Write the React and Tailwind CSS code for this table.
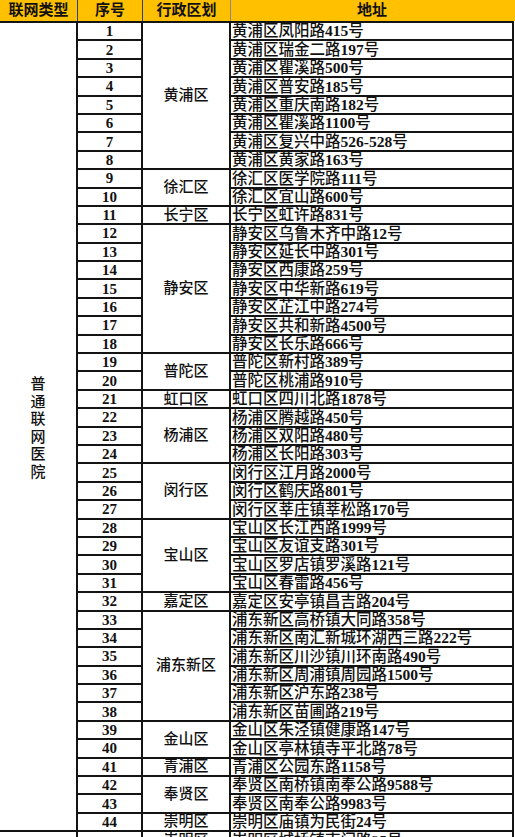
import React from 'react';

const groups = [
  { district: '黄浦区', items: ['黄浦区凤阳路415号', '黄浦区瑞金二路197号', '黄浦区瞿溪路500号', '黄浦区普安路185号', '黄浦区重庆南路182号', '黄浦区瞿溪路1100号', '黄浦区复兴中路526-528号', '黄浦区黄家路163号'] },
  { district: '徐汇区', items: ['徐汇区医学院路111号', '徐汇区宜山路600号'] },
  { district: '长宁区', items: ['长宁区虹许路831号'] },
  { district: '静安区', items: ['静安区乌鲁木齐中路12号', '静安区延长中路301号', '静安区西康路259号', '静安区中华新路619号', '静安区芷江中路274号', '静安区共和新路4500号', '静安区长乐路666号'] },
  { district: '普陀区', items: ['普陀区新村路389号', '普陀区桃浦路910号'] },
  { district: '虹口区', items: ['虹口区四川北路1878号'] },
  { district: '杨浦区', items: ['杨浦区腾越路450号', '杨浦区双阳路480号', '杨浦区长阳路303号'] },
  { district: '闵行区', items: ['闵行区江月路2000号', '闵行区鹤庆路801号', '闵行区莘庄镇莘松路170号'] },
  { district: '宝山区', items: ['宝山区长江西路1999号', '宝山区友谊支路301号', '宝山区罗店镇罗溪路121号', '宝山区春雷路456号'] },
  { district: '嘉定区', items: ['嘉定区安亭镇昌吉路204号'] },
  { district: '浦东新区', items: ['浦东新区高桥镇大同路358号', '浦东新区南汇新城环湖西三路222号', '浦东新区川沙镇川环南路490号', '浦东新区周浦镇周园路1500号', '浦东新区沪东路238号', '浦东新区苗圃路219号'] },
  { district: '金山区', items: ['金山区朱泾镇健康路147号', '金山区亭林镇寺平北路78号'] },
  { district: '青浦区', items: ['青浦区公园东路1158号'] },
  { district: '奉贤区', items: ['奉贤区南桥镇南奉公路9588号', '奉贤区南奉公路9983号'] },
  { district: '崇明区', items: ['崇明区庙镇为民街24号'] },
];

const spanClass = {
  1: 'row-span-1',
  2: 'row-span-2',
  3: 'row-span-3',
  4: 'row-span-4',
  6: 'row-span-6',
  7: 'row-span-7',
  8: 'row-span-8',
};

const font = { fontFamily: '"Liberation Serif", "Noto Sans CJK SC", serif' };

// digits in the address column are printed bold, like the sheet's font
function Address({ text }) {
  return text.split(/(\d[\d-]*)/).map((part, i) =>
    /\d/.test(part) ? (
      <span key={i} className="font-bold">{part}</span>
    ) : (
      <span key={i}>{part}</span>
    )
  );
}

export default function App() {
  let n = 0;
  const cells = [];
  groups.forEach((g, gi) => {
    g.items.forEach((addr, i) => {
      n += 1;
      cells.push(
        <div key={`n${n}`} className="col-start-2 bg-white flex items-center justify-center text-[15px] font-bold leading-none pt-[1px]">
          {n}
        </div>
      );
      if (i === 0) {
        cells.push(
          <div key={`d${gi}`} className={`col-start-3 ${spanClass[g.items.length]} bg-white flex items-center justify-center text-[15px] font-medium leading-none`}>
            {g.district}
          </div>
        );
      }
      cells.push(
        <div key={`a${n}`} className="col-start-4 bg-white flex items-end pl-[1px] text-[15.5px] font-medium leading-[16px] whitespace-nowrap overflow-hidden">
          <Address text={addr} />
        </div>
      );
    });
  });

  return (
    <div className="w-[515px] h-[837px] overflow-hidden bg-white text-[#111]" style={font}>
      {/* header */}
      <div className="grid grid-cols-[77px_65px_88px_285px] h-[21px] bg-[#FFC000] text-[15px] font-bold leading-none">
        <div className="flex items-center justify-center">联网类型</div>
        <div className="flex items-center justify-center border-l border-[#2b3f86]">序号</div>
        <div className="flex items-center justify-center border-l border-[#2b3f86]">行政区划</div>
        <div className="flex items-center justify-center border-l border-[#8a8a8a] pr-[2px]">地址</div>
      </div>

      {/* body */}
      <div className="grid grid-cols-[76px_63px_86px_281px] auto-rows-[16.4px] gap-[2px] bg-[#141414] pt-[2px] pr-[2px] w-[514px]">
        <div className="col-start-1 row-span-[44] bg-white flex flex-col items-center justify-center text-[15px] font-medium leading-[17.5px] pt-[4px]">
          {'普通联网医院'.split('').map((c, i) => (
            <span key={i}>{c}</span>
          ))}
        </div>
        {cells}
        <div className="col-start-1 row-span-3 bg-white"></div>
        <div className="col-start-2 bg-white"></div>
        <div className="col-start-3 bg-white flex items-start justify-center text-[15px] font-medium leading-none pt-[1px]">崇明区</div>
        <div className="col-start-4 bg-white flex items-start pl-[1px] text-[15.5px] font-medium leading-none pt-[1px]">崇明区城桥镇南门路25号</div>
      </div>
    </div>
  );
}
